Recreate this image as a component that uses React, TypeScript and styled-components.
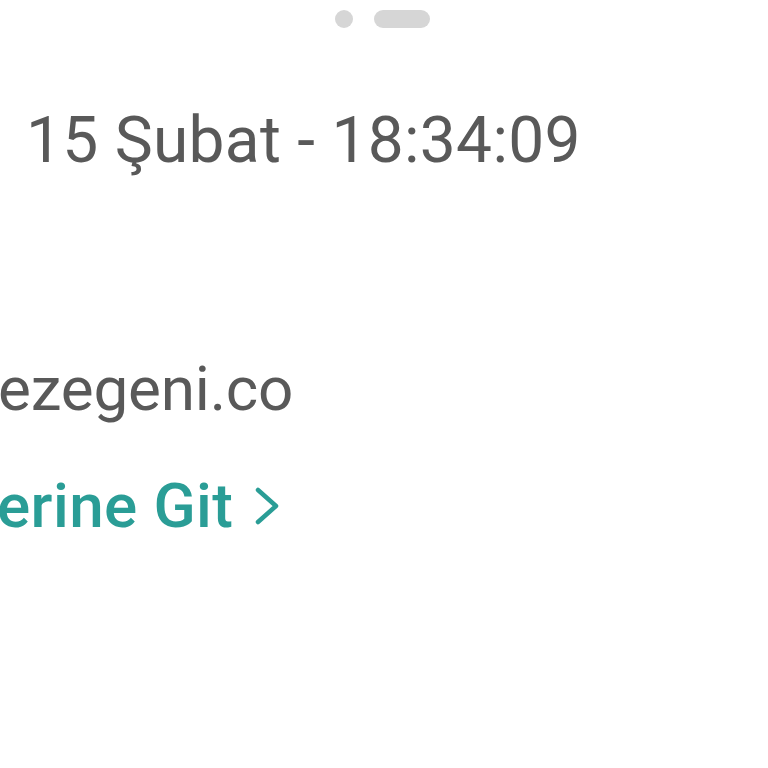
import React from "react";
import styled, { createGlobalStyle } from "styled-components";

const Global = createGlobalStyle`
  html, body { margin: 0; padding: 0; background: #ffffff; }
  body { font-family: Roboto, "Noto Sans", sans-serif; overflow: hidden; }
`;

const Page = styled.div`
  width: 768px;
  height: 768px;
  background: #fff;
  display: flex;
  flex-direction: column;
  overflow: hidden;
`;

const Indicator = styled.div`
  display: flex;
  justify-content: center;
  align-items: center;
  gap: 21px;
  padding-top: 10px;
  padding-right: 4px;
  height: 18px;
`;

const Dot = styled.span<{ $wide?: boolean }>`
  display: block;
  width: ${(p) => (p.$wide ? "56px" : "18px")};
  height: 18px;
  border-radius: 9px;
  background: #d6d6d6;
`;

const DateLine = styled.div`
  margin-top: 75px;
  padding-left: 26px;
  font-size: 64px;
  line-height: 76px;
  letter-spacing: 0.3px;
  color: #595959;
  white-space: nowrap;
`;

const Site = styled.div`
  margin-top: 172px;
  margin-left: -2px;
  font-size: 62px;
  line-height: 76px;
  letter-spacing: -0.2px;
  color: #595959;
  white-space: nowrap;
`;

const Link = styled.div`
  margin-top: 41px;
  margin-left: -3px;
  display: flex;
  align-items: center;
  gap: 20px;
  font-size: 62px;
  line-height: 76px;
  font-weight: 500;
  letter-spacing: 0.4px;
  color: #2a9d96;
  white-space: nowrap;
`;

const Chevron = () => (
  <svg width="28" height="42" viewBox="0 0 28 42" fill="none">
    <path d="M5 5 L23 21 L5 37" stroke="#2a9d96" strokeWidth="4.5" strokeLinecap="round" strokeLinejoin="round" />
  </svg>
);

export default function App() {
  return (
    <Page>
      <Global />
      <Indicator>
        <Dot />
        <Dot $wide />
      </Indicator>
      <DateLine>15 Şubat - 18:34:09</DateLine>
      <Site>ezegeni.co</Site>
      <Link>
        erine Git
        <Chevron />
      </Link>
    </Page>
  );
}
